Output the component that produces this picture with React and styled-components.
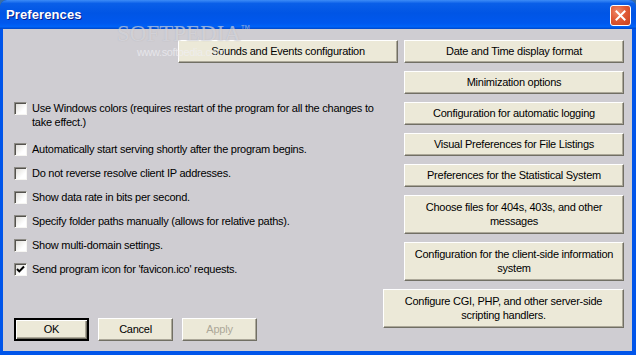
import React, { useState } from 'react';
import styled, { createGlobalStyle } from 'styled-components';

const GlobalStyle = createGlobalStyle`
  html, body {
    margin: 0;
    padding: 0;
    background: #3a6ea5;
  }
  * { box-sizing: border-box; }
`;

const Window = styled.div`
  position: relative;
  width: 636px;
  height: 355px;
  display: flex;
  flex-direction: column;
  background: #0055ea;
  border-radius: 7px 7px 0 0;
  padding: 0 4px 4px 3px;
  overflow: hidden;
  font-family: "Liberation Sans", Arial, sans-serif;
  font-size: 11px;
  letter-spacing: -0.25px;
  color: #000;
`;

const TitleBar = styled.div`
  height: 29px;
  margin: 0 -4px 0 -3px;
  padding: 0 5px 0 6px;
  display: flex;
  align-items: center;
  justify-content: space-between;
  background: linear-gradient(to bottom, #3d8cf7 0%, #0a5fe8 12%, #0055e5 45%, #0058ee 80%, #0063f8 92%, #0046c8 100%);
  border-radius: 7px 7px 0 0;
`;

const Title = styled.div`
  font-weight: bold;
  font-size: 13px;
  color: #fff;
  text-shadow: 1px 1px #0a1e8c;
  letter-spacing: 0.1px;
`;

const CloseButton = styled.div`
  width: 21px;
  height: 21px;
  margin-top: 2px;
  border: 1px solid #fff;
  border-radius: 3px;
  background: radial-gradient(circle at 35% 30%, #f08a6a 0%, #e05a36 45%, #c8401c 100%);
  display: flex;
  align-items: center;
  justify-content: center;
`;

const Body = styled.div`
  flex: 1;
  display: flex;
  gap: 6px;
  padding: 11px 8px 10px 11px;
  background: #cfcdd2;
`;

const LeftColumn = styled.div`
  flex: 1;
  display: flex;
  flex-direction: column;
`;

const RightColumn = styled.div`
  width: 220px;
  display: flex;
  flex-direction: column;
  gap: 8px;
`;

const Button = styled.button`
  font-family: "Liberation Sans", Arial, sans-serif;
  font-size: 11px;
  letter-spacing: -0.25px;
  line-height: 14px;
  color: ${p => (p.disabled ? '#aca899' : '#000')};
  background: #ece9d8;
  border: 1px solid;
  border-color: #fff #716f64 #716f64 #fff;
  box-shadow: inset -1px -1px #aca899;
  height: ${p => (p.tall ? '39px' : '23px')};
  width: ${p => p.w || '100%'};
  margin-left: ${p => p.shift || '0'};
  padding: 0 6px 1px;
  text-align: center;
  ${p => p.isDefault && `
    border-width: 2px;
    border-color: #000;
    box-shadow: inset 1px 1px #fff, inset -1px -1px #716f64, inset -2px -2px #aca899;
  `}
`;

const SoundsButton = styled(Button)`
  align-self: flex-end;
`;

const CheckList = styled.div`
  display: flex;
  flex-direction: column;
  gap: 10px;
  margin-top: 38px;
`;

const CheckRow = styled.label`
  display: flex;
  align-items: flex-start;
  gap: 5px;
  line-height: 14px;
  margin-bottom: ${p => (p.extra ? '3px' : '0')};
  padding-right: 4px;
`;

const Box = styled.span`
  flex: none;
  width: 13px;
  height: 13px;
  margin-top: 1px;
  border: 1px solid;
  border-color: #8d8b86 #f6f5f2 #f6f5f2 #8d8b86;
  box-shadow: inset 1px 1px #55534e;
  background: linear-gradient(135deg, #dcdad5 0%, #ffffff 70%);
  display: flex;
  align-items: center;
  justify-content: center;
`;

const Footer = styled.div`
  margin-top: auto;
  display: flex;
  gap: 9px;
`;

const Watermark = styled.div`
  position: absolute;
  left: 117px;
  top: 21px;
  font-family: "Liberation Serif", "Times New Roman", serif;
  font-size: 23px;
  letter-spacing: 0;
  color: rgba(235, 235, 240, 0.55);
  text-shadow: 0 0 1px rgba(120, 120, 130, 0.35);
  pointer-events: none;
  & sup {
    font-family: "Liberation Sans", Arial, sans-serif;
    font-size: 6px;
    vertical-align: 12px;
  }
`;

const WatermarkUrl = styled.div`
  position: absolute;
  left: 137px;
  top: 46px;
  font-family: "Liberation Sans Narrow", "Liberation Sans", Arial, sans-serif;
  font-size: 11px;
  letter-spacing: -0.4px;
  color: rgba(240, 240, 245, 0.7);
  pointer-events: none;
`;

const options = [
  { text: 'Use Windows colors (requires restart of the program for all the changes to take effect.)', checked: false },
  { text: 'Automatically start serving shortly after the program begins.', checked: false },
  { text: 'Do not reverse resolve client IP addresses.', checked: false },
  { text: 'Show data rate in bits per second.', checked: false },
  { text: 'Specify folder paths manually (allows for relative paths).', checked: false },
  { text: 'Show multi-domain settings.', checked: false },
  { text: "Send program icon for 'favicon.ico' requests.", checked: true },
];

const rightButtons = [
  { text: 'Date and Time display format' },
  { text: 'Minimization options' },
  { text: 'Configuration for automatic logging' },
  { text: 'Visual Preferences for File Listings' },
  { text: 'Preferences for the Statistical System' },
  { text: 'Choose files for 404s, 403s, and other messages', tall: true },
  { text: 'Configuration for the client-side information system', tall: true },
];

const Check = () => (
  <svg width="9" height="9" viewBox="0 0 9 9">
    <path d="M1 4 L3.3 6.4 L8 1.5" fill="none" stroke="#000" strokeWidth="2" />
  </svg>
);

const CloseX = () => (
  <svg width="11" height="11" viewBox="0 0 11 11">
    <path d="M1.5 1.5 L9.5 9.5 M9.5 1.5 L1.5 9.5" stroke="#fff" strokeWidth="2" strokeLinecap="square" />
  </svg>
);

const App = () => {
  const [checks, setChecks] = useState(options.map(o => o.checked));

  const toggle = (i) => {
    setChecks(prev => prev.map((c, idx) => (idx === i ? !c : c)));
  };

  return (
    <>
      <GlobalStyle />
      <Window>
        <TitleBar>
          <Title>Preferences</Title>
          <CloseButton><CloseX /></CloseButton>
        </TitleBar>
        <Body>
          <LeftColumn>
            <SoundsButton w="220px">Sounds and Events configuration</SoundsButton>
            <CheckList>
              {options.map((opt, i) => (
                <CheckRow key={i} extra={i === 0} onClick={() => toggle(i)}>
                  <Box>{checks[i] && <Check />}</Box>
                  <span>{opt.text}</span>
                </CheckRow>
              ))}
            </CheckList>
            <Footer>
              <Button w="75px" isDefault>OK</Button>
              <Button w="75px">Cancel</Button>
              <Button w="75px" disabled>Apply</Button>
            </Footer>
          </LeftColumn>
          <RightColumn>
            {rightButtons.map((b, i) => (
              <Button key={i} tall={b.tall}>{b.text}</Button>
            ))}
            <Button tall w="241px" shift="-21px">
              Configure CGI, PHP, and other server-side scripting handlers.
            </Button>
          </RightColumn>
        </Body>
        <Watermark>SOFTPEDIA<sup>TM</sup></Watermark>
        <WatermarkUrl>www.softpedia.com</WatermarkUrl>
      </Window>
    </>
  );
};

export default App;
